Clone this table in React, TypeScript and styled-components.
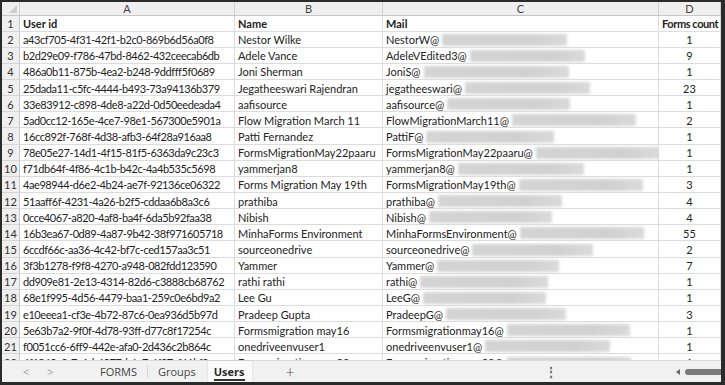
import React from "react";
import styled, { createGlobalStyle } from "styled-components";

const Global = createGlobalStyle`
  html, body { margin: 0; padding: 0; background: #fff; }
  #root { width: 725px; height: 385px; }
`;

const COLS = "18px 215px 148px 276px 1fr";

const Frame = styled.div`
  width: 725px;
  height: 385px;
  box-sizing: border-box;
  border-style: solid;
  border-color: #2a2a2a;
  border-width: 2px 4px 3px 2px;
  display: flex;
  flex-direction: column;
  overflow: hidden;
  background: #fff;
  font-family: Lato, "Liberation Sans", sans-serif;
`;

const Sheet = styled.div`
  flex: 1;
  overflow: hidden;
  display: flex;
  flex-direction: column;
`;

const HeaderRow = styled.div`
  display: grid;
  grid-template-columns: ${COLS};
  height: 13.5px;
  flex: none;
  background: #efefef;
`;

const ColLetter = styled.div`
  box-sizing: border-box;
  border-right: 1px solid #d2d2d2;
  border-bottom: 1px solid #c6c6c6;
  display: flex;
  align-items: center;
  justify-content: center;
  font-size: 11px;
  color: #444;
  overflow: hidden;
`;

const Corner = styled.div`
  box-sizing: border-box;
  border-right: 1px solid #d2d2d2;
  border-bottom: 1px solid #c6c6c6;
  position: relative;
  &::after {
    content: "";
    position: absolute;
    right: 2px;
    bottom: 2px;
    width: 0;
    height: 0;
    border-left: 8px solid transparent;
    border-bottom: 8px solid #cdcdcd;
  }
`;

const Row = styled.div`
  display: grid;
  grid-template-columns: ${COLS};
  height: 16.15px;
  flex: none;
`;

const RowNum = styled.div`
  box-sizing: border-box;
  background: #efefef;
  border-right: 1px solid #c6c6c6;
  border-bottom: 1px solid #d6d6d6;
  display: flex;
  align-items: center;
  justify-content: center;
  font-size: 11px;
  color: #333;
  padding-top: 1px;
`;

const Cell = styled.div<{ $center?: boolean; $bold?: boolean; $tight?: boolean }>`
  box-sizing: border-box;
  border-right: 1px solid #dcdcdc;
  border-bottom: 1px solid #dcdcdc;
  display: flex;
  align-items: center;
  justify-content: ${(p) => (p.$center ? "center" : "flex-start")};
  padding: 1px ${(p) => (p.$center ? "0" : "3px")} 0;
  font-size: 11px;
  letter-spacing: ${(p) => (p.$tight ? "-0.42px" : "0")};
  font-weight: ${(p) => (p.$bold ? 700 : 400)};
  color: #222;
  white-space: nowrap;
  overflow: hidden;
`;

const Blur = styled.span`
  display: inline-block;
  flex: none;
  width: 125px;
  height: 12px;
  margin-left: 3px;
  background: linear-gradient(90deg, #d4d4d4 0%, #d0d0d0 70%, #dadada 100%);
  filter: blur(1.6px);
`;

const TabBar = styled.div`
  flex: none;
  height: 22px;
  background: #f1f1f1;
  border-top: 1px solid #dadada;
  box-sizing: border-box;
  display: flex;
  align-items: stretch;
  font-family: "Open Sans", "Noto Sans", sans-serif;
  font-size: 11px;
  color: #444;
`;

const Nav = styled.div`
  box-sizing: border-box;
  display: flex;
  align-items: center;
  gap: 18px;
  padding-left: 21px;
  width: 88px;
  color: #a0a0a0;
`;

const Tab = styled.div<{ $active?: boolean }>`
  display: flex;
  align-items: center;
  margin-left: ${(p) => (p.$active ? "2px" : "0")};
  padding: 0 ${(p) => (p.$active ? "7px 0 6px" : "10px")};
  background: ${(p) => (p.$active ? "#fafafa" : "transparent")};
  font-weight: ${(p) => (p.$active ? 700 : 400)};
  color: ${(p) => (p.$active ? "#2a2a2a" : "#444")};
  box-shadow: ${(p) => (p.$active ? "0 0 2px rgba(0,0,0,0.12)" : "none")};
`;

const TabLabel = styled.span<{ $active?: boolean }>`
  position: relative;
  &::after {
    content: "";
    display: ${(p) => (p.$active ? "block" : "none")};
    position: absolute;
    left: 0;
    right: 0;
    bottom: -2px;
    height: 2px;
    background: #333;
  }
`;

const Sep = styled.div`
  width: 1px;
  margin: 4px 0;
  background: #d6d6d6;
`;

const Plus = styled.div`
  display: flex;
  align-items: center;
  margin-left: 34px;
  font-size: 16px;
  font-weight: 300;
  color: #555;
`;

const Spacer = styled.div`
  flex: 1;
`;

const Dots = styled.div`
  display: flex;
  align-items: center;
  color: #666;
  font-size: 12px;
  font-weight: 700;
  margin-right: 119px;
`;

const Scroll = styled.div`
  display: flex;
  align-items: center;
  gap: 5px;
  width: 45px;
`;

const Arrow = styled.div`
  width: 0;
  height: 0;
  border-top: 3px solid transparent;
  border-bottom: 3px solid transparent;
  border-right: 4px solid #666;
`;

const Thumb = styled.div`
  flex: 1;
  height: 6px;
  border-radius: 3px 0 0 3px;
  background: #7a7a7a;
`;

type R = [string, string, string, string, number];

const rows: R[] = [
  ["a43cf705-4f31-42f1-b2c0-869b6d56a0f8", "Nestor Wilke", "NestorW@", "1", 125],
  ["b2d29e09-f786-47bd-8462-432ceecab6db", "Adele Vance", "AdeleVEdited3@", "9", 115],
  ["486a0b11-875b-4ea2-b248-9ddfff5f0689", "Joni Sherman", "JoniS@", "1", 145],
  ["25dada11-c5fc-4444-b493-73a94136b379", "Jegatheeswari Rajendran", "jegatheeswari@", "23", 125],
  ["33e83912-c898-4de8-a22d-0d50eedeada4", "aafisource", "aafisource@", "1", 123],
  ["5ad0cc12-165e-4ce7-98e1-567300e5901a", "Flow Migration March 11", "FlowMigrationMarch11@", "2", 124],
  ["16cc892f-768f-4d38-afb3-64f28a916aa8", "Patti Fernandez", "PattiF@", "1", 128],
  ["78e05e27-14d1-4f15-81f5-6363da9c23c3", "FormsMigrationMay22paaru", "FormsMigrationMay22paaru@", "1", 124],
  ["f71db64f-4f86-4c1b-b42c-4a4b535c5698", "yammerjan8", "yammerjan8@", "1", 126],
  ["4ae98944-d6e2-4b24-ae7f-92136ce06322", "Forms Migration May 19th", "FormsMigrationMay19th@", "3", 124],
  ["51aaff6f-4231-4a26-b2f5-cddaa6b8a3c6", "prathiba", "prathiba@", "4", 124],
  ["0cce4067-a820-4af8-ba4f-6da5b92faa38", "Nibish", "Nibish@", "4", 123],
  ["16b3ea67-0d89-4a87-9b42-38f971605718", "MinhaForms Environment", "MinhaFormsEnvironment@", "55", 124],
  ["6ccdf66c-aa36-4c42-bf7c-ced157aa3c51", "sourceonedrive", "sourceonedrive@", "2", 121],
  ["3f3b1278-f9f8-4270-a948-082fdd123590", "Yammer", "Yammer@", "7", 122],
  ["dd909e81-2e13-4314-82d6-c3888cb68762", "rathi rathi", "rathi@", "1", 128],
  ["68e1f995-4d56-4479-baa1-259c0e6bd9a2", "Lee Gu", "LeeG@", "1", 123],
  ["e10eeea1-cf3e-4b72-87c6-0ea936d5b97d", "Pradeep Gupta", "PradeepG@", "3", 120],
  ["5e63b7a2-9f0f-4d78-93ff-d77c8f17254c", "Formsmigration may16", "Formsmigrationmay16@", "1", 123],
  ["f0051cc6-6ff9-442e-afa0-2d436c2b864c", "onedriveenvuser1", "onedriveenvuser1@", "1", 125],
  ["4f1260a2-7e1d-4077-b6a7-6f27af61bf9c", "Formsmigration may22", "Formsmigrationmay22@", "1", 124],
];

export default function App() {
  return (
    <>
      <Global />
      <Frame>
        <Sheet>
          <HeaderRow>
            <Corner />
            <ColLetter>A</ColLetter>
            <ColLetter>B</ColLetter>
            <ColLetter>C</ColLetter>
            <ColLetter>D</ColLetter>
          </HeaderRow>
          <Row>
            <RowNum>1</RowNum>
            <Cell $bold>User id</Cell>
            <Cell $bold>Name</Cell>
            <Cell $bold>Mail</Cell>
            <Cell $bold $tight>Forms count</Cell>
          </Row>
          {rows.map((r, i) => (
            <Row key={i}>
              <RowNum>{i + 2}</RowNum>
              <Cell $tight>{r[0]}</Cell>
              <Cell>{r[1]}</Cell>
              <Cell>
                {r[2]}
                <Blur style={{ width: r[4] }} />
              </Cell>
              <Cell $center>{r[3]}</Cell>
            </Row>
          ))}
        </Sheet>
        <TabBar>
          <Nav>
            <span>&lt;</span>
            <span>&gt;</span>
          </Nav>
          <Tab>FORMS</Tab>
          <Sep />
          <Tab>Groups</Tab>
          <Tab $active>
            <TabLabel $active>Users</TabLabel>
          </Tab>
          <Plus>+</Plus>
          <Spacer />
          <Dots>⋮</Dots>
          <Scroll>
            <Arrow />
            <Thumb />
          </Scroll>
        </TabBar>
      </Frame>
    </>
  );
}
